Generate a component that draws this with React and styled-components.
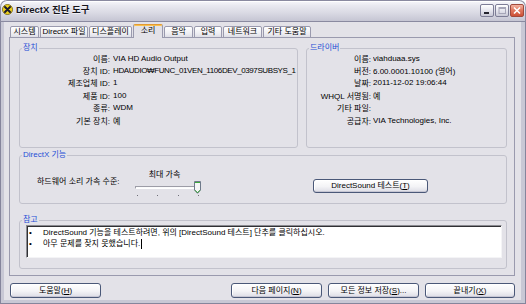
import React from 'react';
import styled, { createGlobalStyle } from 'styled-components';

const GlobalStyle = createGlobalStyle`
  html, body { margin: 0; padding: 0; background: #ffffff; }
  body {
    font-family: 'Liberation Sans', 'Noto Sans CJK KR', sans-serif;
    font-size: 8px;
    color: #000;
  }
  * { box-sizing: border-box; }
`;

const FACE = '#e3e2e8';

const Window = styled.div`
  width: 526px;
  height: 304px;
  display: flex;
  flex-direction: column;
  background: #c8c8d5;
  border-radius: 7px 7px 0 0;
  box-shadow: inset 0 0 0 1px #85859c;
  overflow: hidden;
`;

const TitleBar = styled.div`
  height: 22px;
  flex: none;
  display: flex;
  align-items: flex-start;
  padding: 4px 2px 0 2px;
  border-radius: 7px 7px 0 0;
  background: linear-gradient(#fbfbfd 0%, #e9e9f0 25%, #d9d9e3 60%, #c3c3d1 100%);
  box-shadow: inset 0 0 0 1px #8a8aa0, inset 0 2px 0 #ffffff;
`;

const Title = styled.span`
  margin-left: 3px;
  font-size: 9.5px;
  font-weight: bold;
  line-height: 12px;
  color: #15151c;
  text-shadow: 0 1px 0 rgba(255, 255, 255, 0.6);
`;

const CaptionButtons = styled.div`
  margin-left: auto;
  display: flex;
  gap: 1px;
`;

const CaptionButton = styled.div`
  width: 14px;
  height: 13px;
  border-radius: 2px;
  display: flex;
  align-items: center;
  justify-content: center;
  border: 1px solid ${p => (p.$close ? '#a14a3c' : '#7d7d96')};
  background: ${p =>
    p.$close
      ? 'linear-gradient(#f3b3a2, #e27a62 45%, #cc5036)'
      : 'linear-gradient(#ffffff, #e6e6ee 50%, #c8c8d6)'};
`;

const Body = styled.div`
  flex: 1;
  margin: 0 5px 4px 4px;
  padding: 2px 6px 2px 5px;
  background: ${FACE};
  display: flex;
  flex-direction: column;
`;

const TabStrip = styled.div`
  height: 14px;
  margin-bottom: -1px;
  padding-left: 1px;
  display: flex;
  align-items: flex-end;
  gap: 1px;
  position: relative;
  z-index: 1;
`;

const Tab = styled.div`
  width: ${p => p.$w}px;
  height: ${p => (p.$active ? 14 : 12)}px;
  border: 1px solid #9a9aae;
  border-bottom: ${p => (p.$active ? 'none' : '1px solid #9a9aae')};
  border-top-color: ${p => (p.$active ? '#e39a32' : '#9a9aae')};
  border-radius: 2px 2px 0 0;
  background: ${p => (p.$active ? FACE : 'linear-gradient(#ffffff, #ececf1 70%, #dedee6)')};
  box-shadow: ${p => (p.$active ? 'inset 0 1px 0 #f7c04e' : 'none')};
  text-align: center;
  line-height: ${p => (p.$active ? 12 : 10)}px;
  white-space: nowrap;
`;

const Panel = styled.div`
  height: 239px;
  flex: none;
  border: 1px solid #9a9aae;
  background: ${FACE};
  padding: 6px 7px 6px 9px;
  display: flex;
  flex-direction: column;
`;

const GroupRow = styled.div`
  display: flex;
  gap: 8px;
`;

const Group = styled.fieldset`
  margin: ${p => p.$mt || 0}px 0 0 0;
  padding: 0;
  min-width: 0;
  width: ${p => (p.$w ? `${p.$w}px` : 'auto')};
  flex: ${p => (p.$w ? 'none' : '1')};
  height: ${p => p.$h}px;
  border: 1px solid #c2c2cc;
  border-radius: 3px;
`;

const Legend = styled.legend`
  margin-left: 2px;
  padding: 0 1px;
  line-height: 8px;
  color: #1f4fd6;
`;

const InfoGrid = styled.div`
  display: grid;
  grid-template-columns: ${p => p.$labelW}px 1fr;
  column-gap: ${p => p.$gap}px;
  grid-auto-rows: 12.4px;
  align-items: center;
`;

const Label = styled.span`
  text-align: right;
  white-space: nowrap;
`;

const Value = styled.span`
  white-space: nowrap;
  overflow: hidden;
  letter-spacing: ${p => (p.$tight ? '-0.4px' : 'normal')};
`;

const FeatureRow = styled.div`
  display: flex;
  align-items: flex-start;
  padding-left: 17px;
`;

const FeatureLabel = styled.span`
  width: 98px;
  margin-top: 18px;
  line-height: 10px;
  white-space: nowrap;
`;

const SliderCol = styled.div`
  width: 66px;
  margin-top: 11px;
  display: flex;
  flex-direction: column;
`;

const SliderCaption = styled.div`
  line-height: 10px;
  text-align: center;
  padding-right: 7px;
`;

const SliderArea = styled.div`
  position: relative;
  height: 16px;
`;

const Track = styled.div`
  position: absolute;
  left: 0;
  right: 3px;
  top: 6px;
  height: 3px;
  background: #fbfbfc;
  border-top: 1px solid #9c9ca6;
  border-left: 1px solid #9c9ca6;
  border-bottom: 1px solid #ffffff;
`;

const Thumb = styled.svg`
  position: absolute;
  right: 0;
  top: 1px;
`;

const Ticks = styled.div`
  position: absolute;
  left: 2px;
  right: 2px;
  top: 15px;
  display: flex;
  justify-content: space-between;
`;

const Tick = styled.span`
  width: 1px;
  height: 1px;
  background: #6f6f78;
`;

const Button = styled.button`
  width: ${p => p.$w}px;
  height: ${p => p.$h || 15}px;
  margin: ${p => p.$mt || 0}px 0 0 ${p => p.$ml || 0}px;
  padding: 0;
  font: inherit;
  color: #000;
  line-height: ${p => (p.$h || 15) - 2}px;
  border: 1px solid #4a5878;
  border-radius: 3px;
  background: linear-gradient(#ffffff, #f3f3f6 55%, #dcdce5);
  box-shadow: inset 0 -1px 0 #c6c6d3, inset 1px 1px 0 #ffffff;
  white-space: nowrap;
`;

const NoteBox = styled.div`
  margin: 1px 4px 0 6px;
  height: 33px;
  background: #ffffff;
  border: 1px solid;
  border-color: #8a8a90 #f4f4f6 #f4f4f6 #8a8a90;
  box-shadow: inset 1px 1px 0 #303034;
  padding: 2px 0 0 2px;
`;

const NoteLine = styled.div`
  display: flex;
  line-height: 10.5px;
  white-space: nowrap;
`;

const Bullet = styled.span`
  width: 14px;
`;

const Caret = styled.span`
  display: inline-block;
  width: 1px;
  height: 10px;
  margin-left: 1px;
  vertical-align: top;
  background: #000;
`;

const ButtonRow = styled.div`
  margin-top: 7px;
  padding-left: 1px;
  display: flex;
  justify-content: space-between;
`;

const ButtonGroup = styled.div`
  display: flex;
  gap: 6px;
`;

const tabs = [
  ['시스템', 29],
  ['DirectX 파일', 48],
  ['디스플레이', 43],
  ['소리', 30, true],
  ['음악', 29],
  ['입력', 28],
  ['네트워크', 39],
  ['기타 도움말', 48],
];

const deviceRows = [
  ['이름:', 'VIA HD Audio Output'],
  ['장치 ID:', 'HDAUDIO₩FUNC_01VEN_1106DEV_0397SUBSYS_1', true],
  ['제조업체 ID:', '1'],
  ['제품 ID:', '100'],
  ['종류:', 'WDM'],
  ['기본 장치:', '예'],
];

const driverRows = [
  ['이름:', 'viahduaa.sys'],
  ['버전:', '6.00.0001.10100 (영어)'],
  ['날짜:', '2011-12-02 19:06:44'],
  ['WHQL 서명됨:', '예'],
  ['기타 파일:', ''],
  ['공급자:', 'VIA Technologies, Inc.'],
];

const DxIcon = () => (
  <svg width="11" height="11" viewBox="0 0 11 11">
    <circle cx="5.5" cy="5.5" r="5" fill="#f0d21c" stroke="#6b5a08" strokeWidth="0.8" />
    <path d="M3 3 L8 8 M8 3 L3 8" stroke="#1b1b2e" strokeWidth="2" strokeLinecap="round" />
  </svg>
);

const InfoList = ({ rows, labelW, gap }) => (
  <InfoGrid $labelW={labelW} $gap={gap}>
    {rows.map(([label, value, tight]) => (
      <React.Fragment key={label}>
        <Label>{label}</Label>
        <Value $tight={tight}>{value}</Value>
      </React.Fragment>
    ))}
  </InfoGrid>
);

const App = () => (
  <>
    <GlobalStyle />
    <Window>
      <TitleBar>
        <DxIcon />
        <Title>DirectX 진단 도구</Title>
        <CaptionButtons>
          <CaptionButton>
            <svg width="12" height="11" viewBox="0 0 12 11">
              <rect x="3" y="7" width="5" height="2" fill="#23232e" />
            </svg>
          </CaptionButton>
          <CaptionButton>
            <svg width="12" height="11" viewBox="0 0 12 11">
              <rect x="3" y="2.5" width="6.5" height="6" fill="none" stroke="#a6a6b8" strokeWidth="1" />
              <rect x="3" y="2.5" width="6.5" height="1.5" fill="#a6a6b8" />
            </svg>
          </CaptionButton>
          <CaptionButton $close>
            <svg width="12" height="11" viewBox="0 0 12 11">
              <path d="M3 2.5 L9 8.5 M9 2.5 L3 8.5" stroke="#ffffff" strokeWidth="1.6" />
            </svg>
          </CaptionButton>
        </CaptionButtons>
      </TitleBar>

      <Body>
        <TabStrip>
          {tabs.map(([name, w, active]) => (
            <Tab key={name} $w={w} $active={active}>
              {name}
            </Tab>
          ))}
        </TabStrip>

        <Panel>
          <GroupRow>
            <Group $w={279} $h={104}>
              <Legend>장치</Legend>
              <InfoList rows={deviceRows} labelW={90} gap={3} />
            </Group>
            <Group $h={104}>
              <Legend>드라이버</Legend>
              <InfoList rows={driverRows} labelW={64} gap={2} />
            </Group>
          </GroupRow>

          <Group $mt={3} $h={58}>
            <Legend>DirectX 기능</Legend>
            <FeatureRow>
              <FeatureLabel>하드웨어 소리 가속 수준:</FeatureLabel>
              <SliderCol>
                <SliderCaption>최대 가속</SliderCaption>
                <SliderArea>
                  <Track />
                  <Ticks>
                    <Tick />
                    <Tick />
                    <Tick />
                    <Tick />
                  </Ticks>
                  <Thumb width="7" height="13" viewBox="0 0 7 13">
                    <path d="M0.5 0.5 H6.5 V9 L3.5 12.3 L0.5 9 Z" fill="#f5f5f7" stroke="#6f7a8a" strokeWidth="1" />
                    <path d="M1 1.5 H6" stroke="#3caa3c" strokeWidth="1" />
                    <path d="M1 9.2 L3.5 11.8 L6 9.2" fill="none" stroke="#2f9a2f" strokeWidth="1" />
                  </Thumb>
                </SliderArea>
              </SliderCol>
              <Button $w={115} $h={14} $mt={20} $ml={112}>
                DirectSound 테스트(<u>T</u>)
              </Button>
            </FeatureRow>
          </Group>

          <Group $mt={12} $h={48}>
            <Legend>참고</Legend>
            <NoteBox>
              <NoteLine>
                <Bullet>•</Bullet>
                DirectSound 기능을 테스트하려면, 위의 [DirectSound 테스트] 단추를 클릭하십시오.
              </NoteLine>
              <NoteLine>
                <Bullet>•</Bullet>
                아무 문제를 찾지 못했습니다.
                <Caret />
              </NoteLine>
            </NoteBox>
          </Group>
        </Panel>

        <ButtonRow>
          <Button $w={91}>
            도움말(<u>H</u>)
          </Button>
          <ButtonGroup>
            <Button $w={91}>
              다음 페이지(<u>N</u>)
            </Button>
            <Button $w={91}>
              모든 정보 저장(<u>S</u>)...
            </Button>
            <Button $w={90}>
              끝내기(<u>X</u>)
            </Button>
          </ButtonGroup>
        </ButtonRow>
      </Body>
    </Window>
  </>
);

export default App;
